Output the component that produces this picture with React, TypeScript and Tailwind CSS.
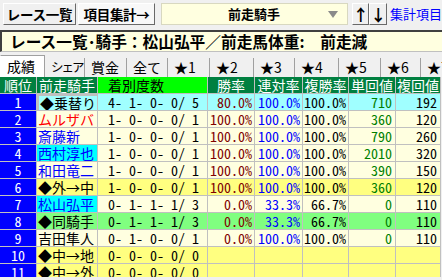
const MONO = { fontFamily: '"Noto Sans Mono CJK JP", "Noto Sans CJK JP", monospace' };

type Row = {
  no: number;
  name: string;
  nameColor: string;
  nameBg?: string;
  bg: string;
  record: string;
  win?: string;
  quin?: string;
  place?: string;
  tan?: string;
  fuku?: string;
  selected?: boolean;
};

const rows: Row[] = [
  { no: 1, name: '◆乗替り', nameColor: 'text-black', bg: 'bg-[#a0ffff]', record: '4- 1- 0- 0/ 5', win: '80.0%', quin: '100.0%', place: '100.0%', tan: '710', fuku: '192', selected: true },
  { no: 2, name: 'ムルザバ', nameColor: 'text-[#ff0000]', bg: 'bg-[#ffffe0]', record: '1- 0- 0- 0/ 1', win: '100.0%', quin: '100.0%', place: '100.0%', tan: '360', fuku: '120' },
  { no: 3, name: '斎藤新', nameColor: 'text-[#0000ff]', bg: 'bg-[#ffffe0]', record: '1- 0- 0- 0/ 1', win: '100.0%', quin: '100.0%', place: '100.0%', tan: '790', fuku: '260' },
  { no: 4, name: '西村淳也', nameColor: 'text-[#0000ff]', nameBg: 'bg-[#00ffff]', bg: 'bg-[#ffffe0]', record: '1- 0- 0- 0/ 1', win: '100.0%', quin: '100.0%', place: '100.0%', tan: '2010', fuku: '320' },
  { no: 5, name: '和田竜二', nameColor: 'text-[#0000ff]', bg: 'bg-[#ffffe0]', record: '1- 0- 0- 0/ 1', win: '100.0%', quin: '100.0%', place: '100.0%', tan: '390', fuku: '150' },
  { no: 6, name: '◆外→中', nameColor: 'text-black', bg: 'bg-[#ffff80]', record: '1- 0- 0- 0/ 1', win: '100.0%', quin: '100.0%', place: '100.0%', tan: '360', fuku: '120' },
  { no: 7, name: '松山弘平', nameColor: 'text-[#0000ff]', nameBg: 'bg-[#00ffff]', bg: 'bg-[#ffffe0]', record: '0- 1- 1- 1/ 3', win: '0.0%', quin: '33.3%', place: '66.7%', tan: '0', fuku: '110' },
  { no: 8, name: '◆同騎手', nameColor: 'text-black', bg: 'bg-[#80ff80]', record: '0- 1- 1- 1/ 3', win: '0.0%', quin: '33.3%', place: '66.7%', tan: '0', fuku: '110' },
  { no: 9, name: '吉田隼人', nameColor: 'text-black', bg: 'bg-[#ffffe0]', record: '0- 1- 0- 0/ 1', win: '0.0%', quin: '100.0%', place: '100.0%', tan: '0', fuku: '110' },
  { no: 10, name: '◆中→地', nameColor: 'text-black', bg: 'bg-[#ffff80]', record: '0- 0- 0- 0/ 0' },
  { no: 11, name: '◆中→外', nameColor: 'text-black', bg: 'bg-[#ffff80]', record: '0- 0- 0- 0/ 0' },
];

const tabs = [
  { label: '成績', w: 'w-[45px]', extra: '' },
  { label: 'シェア', w: 'w-[40px]', extra: 'text-[12.5px] tracking-[-2px] pl-[4px]' },
  { label: '賞金', w: 'w-[42px]', extra: '' },
  { label: '全て', w: 'w-[41px]', extra: '' },
  { label: '★1', w: 'w-[42px]', extra: '' },
  { label: '★2', w: 'w-[44px]', extra: '' },
  { label: '★3', w: 'w-[41px]', extra: '' },
  { label: '★4', w: 'w-[44px]', extra: '' },
  { label: '★5', w: 'w-[42px]', extra: '' },
  { label: '★6', w: 'w-[40px]', extra: '' },
  { label: '★7', w: 'w-[40px]', extra: '' },
];

const cell = 'h-[17px] border-r border-b border-[#c0c0c0] flex items-center whitespace-nowrap overflow-hidden leading-none';

// Top toolbar with buttons, combobox and sort arrows
function Toolbar() {
  const btn = 'h-[22px] shrink-0 flex items-center justify-center whitespace-nowrap bg-[#f0f0f0] border border-t-white border-l-white border-r-[#696969] border-b-[#696969] font-bold text-[13.5px] tracking-[-0.3px] text-black';
  return (
    <div className="h-[28px] flex items-center pl-[3px] gap-[2px] bg-[#f0f0f0]">
      <div className={`${btn} w-[73px]`}>レース一覧</div>
      <div className={`${btn} w-[77px] bg-[#f8f8f8] border-[#c8c8c8]`}>項目集計→</div>
      <div className="ml-[4px] w-[187px] shrink-0 h-[22px] bg-[#ffffe0] border border-[#d8d8c0] flex items-center">
        <span className="ml-[66px] font-bold text-[13px]">前走騎手</span>
        <svg className="ml-auto mr-[9px]" width="10" height="7" viewBox="0 0 10 7">
          <polygon points="0,0 10,0 5,7" fill="#8a8a8a" />
        </svg>
      </div>
      <div className={`${btn} w-[17px] ml-[2px] text-[16px]`}>↑</div>
      <div className={`${btn} w-[18px] -ml-[2px] text-[16px]`}>↓</div>
      <span className="ml-[1px] text-[13px] text-[#0000ff] whitespace-nowrap">集計項目&gt;</span>
    </div>
  );
}

export default function App() {
  return (
    <div className="w-[442px] h-[280px] overflow-hidden bg-[#f0f0f0] flex flex-col" style={{ fontFamily: '"Noto Sans CJK JP", sans-serif' }}>
      <Toolbar />
      {/* Title bar */}
      <div className="mt-[2px] h-[22px] shrink-0 bg-[#ffffe0] border-t-2 border-l-2 border-[#404040] border-b border-b-[#c0c0c0] flex items-center pl-[8px] font-bold text-[15.7px] whitespace-nowrap">
        レース一覧･騎手：松山弘平／前走馬体重:　前走減
      </div>
      {/* Tabs */}
      <div className="mt-[3px] h-[22px] shrink-0 flex items-end text-[14px] whitespace-nowrap overflow-hidden">
        {tabs.map( ( t, i ) => (
          <div
            key={t.label}
            className={`${t.w} shrink-0 flex items-center pl-[6px] border-r border-[#a0a0a0] ${i === 0 ? 'h-[22px] bg-white border-l border-t border-l-white' : 'h-[19px] bg-[#f0f0f0]'} ${t.extra}`}
          >
            {t.label}
          </div>
        ) )}
      </div>
      {/* Table */}
      <div className="h-[200px] shrink-0 overflow-hidden grid grid-cols-[37px_61px_110px_47px_48px_46px_47px_45px] auto-rows-[17px] text-[14px]" style={MONO}>
        {['順位', '前走騎手', '着別度数', '勝率', '連対率', '複勝率', '単回値', '複回値'].map( ( h, i ) => (
          <div
            key={h}
            className={`${cell} ${i === 2 ? 'bg-[#00ff00] text-black pl-[10px]' : 'bg-[#008040] text-white justify-center'}`}
          >
            {h}
          </div>
        ) )}
        {rows.map( r => (
          <div key={r.no} className="contents">
            <div className={`${cell} bg-[#0000ff] text-white justify-center border-[#000080]`}>{r.no}</div>
            <div className={`${cell} ${r.nameBg ?? r.bg} ${r.nameColor} pl-[1px] ${r.selected ? 'border-2 border-[#800000]' : ''}`}>{r.name}</div>
            <div className={`${cell} ${r.bg} pl-[10px]`}>{r.record}</div>
            <div className={`${cell} ${r.bg} justify-end pr-[2px] text-[#800000]`}>{r.win}</div>
            <div className={`${cell} ${r.bg} justify-end pr-[2px] text-[#0000ff]`}>{r.quin}</div>
            <div className={`${cell} ${r.bg} justify-end pr-[2px] text-black`}>{r.place}</div>
            <div className={`${cell} ${r.bg} justify-end pr-[3px] text-[#008000]`}>{r.tan}</div>
            <div className={`${cell} ${r.bg} justify-end pr-[3px] text-black`}>{r.fuku}</div>
          </div>
        ) )}
      </div>
    </div>
  );
}
